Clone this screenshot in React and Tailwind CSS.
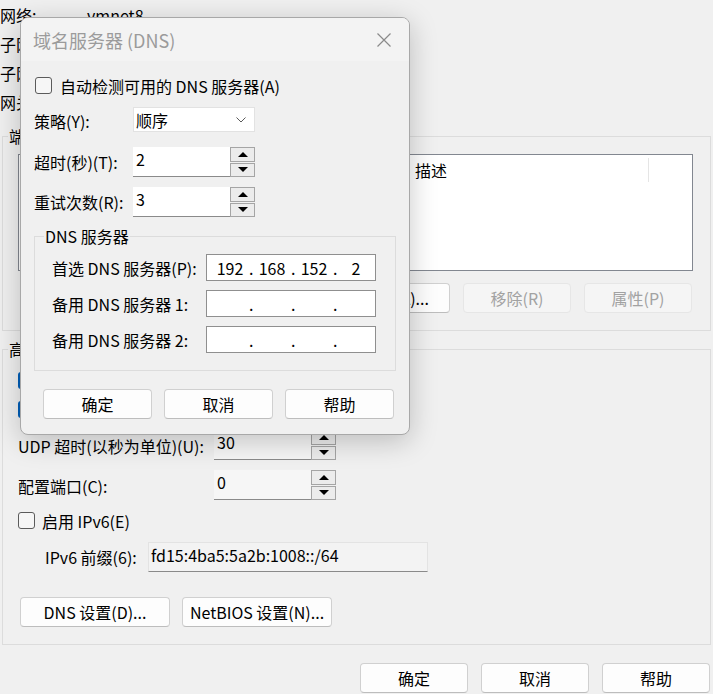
import React from 'react';

const Check = ({ checked }) =>
  checked ? (
    <span className="flex h-[17px] w-[17px] shrink-0 items-center justify-center rounded-[3px] bg-[#005fb8]">
      <svg width="11" height="9" viewBox="0 0 11 9">
        <path d="M1 4.5 L4 7.5 L10 1.5" fill="none" stroke="#fff" strokeWidth="1.4" />
      </svg>
    </span>
  ) : (
    <span className="h-[17px] w-[17px] shrink-0 rounded-[3px] border border-[#5b5b5b] bg-[#f6f6f6]" />
  );

const Tri = ({ up }) => (
  <svg width="10" height="5" viewBox="0 0 10 5">
    <path d={up ? 'M0 5 L5 0 L10 5 Z' : 'M0 0 L10 0 L5 5 Z'} fill="#000" />
  </svg>
);

const Spin = () => (
  <div className="flex h-full w-[25px] shrink-0 flex-col gap-px">
    <span className="flex flex-1 items-center justify-center border border-[#a5a5a5] bg-[#ececec]">
      <Tri up />
    </span>
    <span className="flex flex-1 items-center justify-center border border-[#a5a5a5] bg-[#ececec]">
      <Tri />
    </span>
  </div>
);

const SpinBox = ({ value, width, bg = 'bg-white' }) => (
  <div className="flex h-[30px]">
    <div className={`flex items-start border-b border-[#8a8a8a] pl-[3px] pt-[4px] ${bg} ${width}`}>{value}</div>
    <Spin />
  </div>
);

const Btn = ({ children, className = '', disabled }) => (
  <button
    className={`flex h-[30px] w-[108px] items-center justify-center rounded-[4px] border ${
      disabled
        ? 'border-[#e6e6e6] bg-[#f5f5f5] text-[#a2a2a2]'
        : 'border-[#d0d0d0] border-b-[#bdbdbd] bg-[#fdfdfd] text-black'
    } ${className}`}
  >
    {children}
  </button>
);

const IpBox = ({ parts }) => (
  <div className="flex h-[27px] w-[170px] items-center border border-[#8f8f8f] bg-white pl-[4px]">
    {parts.map((p, i) => (
      <React.Fragment key={i}>
        <span className="w-[38px] text-center">{p}</span>
        {i < 3 && <span className="w-[4px] text-center">.</span>}
      </React.Fragment>
    ))}
  </div>
);

const DnsDialog = () => (
  <div className="absolute left-[20px] top-[17px] z-10 w-[390px] overflow-hidden rounded-[8px] border border-[#a8a8a8] bg-[#f0f0f0] shadow-[0_6px_28px_rgba(0,0,0,0.22)]">
    <div className="flex h-[43px] items-center justify-between bg-[#f3f3f3] pl-[12px] pr-[18px]">
      <span className="text-[18px] text-[#9b9b9b]">域名服务器 (DNS)</span>
      <svg width="14" height="14" viewBox="0 0 14 14">
        <path d="M0.5 0.5 L13.5 13.5 M13.5 0.5 L0.5 13.5" stroke="#8a8a8a" strokeWidth="1.2" />
      </svg>
    </div>

    <div className="flex flex-col pb-[15px] pl-[13px] pt-[16px]">
      <div className="flex h-[17px] items-center gap-[8px] pl-px">
        <Check />
        <span>自动检测可用的 DNS 服务器(A)</span>
      </div>

      <div className="mt-[13px] flex h-[25px] items-center">
        <span className="w-[99px] pt-[3px]">策略(Y):</span>
        <div className="flex h-full w-[122px] items-center justify-between border border-[#e2e2e2] bg-white pl-[2px] pr-[8px]">
          <span>顺序</span>
          <svg width="10" height="6" viewBox="0 0 10 6">
            <path d="M0.5 0.5 L5 5 L9.5 0.5" fill="none" stroke="#5a5a5a" strokeWidth="1" />
          </svg>
        </div>
      </div>

      <div className="mt-[15px] flex h-[30px] items-center">
        <span className="w-[99px]">超时(秒)(T):</span>
        <SpinBox value="2" width="w-[97px]" />
      </div>

      <div className="mt-[10px] flex h-[30px] items-center">
        <span className="w-[99px]">重试次数(R):</span>
        <SpinBox value="3" width="w-[97px]" />
      </div>

      <fieldset className="mt-[10px] w-[362px] border border-[#dcdcdc] p-0">
        <legend className="ml-[9px] px-px leading-[18px]">DNS 服务器</legend>
        <div className="flex flex-col gap-[9px] pb-[17px] pl-[17px] pt-[9px]">
          <div className="flex items-center">
            <span className="w-[154px]">首选 DNS 服务器(P):</span>
            <IpBox parts={['192', '168', '152', '2']} />
          </div>
          <div className="flex items-center">
            <span className="w-[154px]">备用 DNS 服务器 1:</span>
            <IpBox parts={['', '', '', '']} />
          </div>
          <div className="flex items-center">
            <span className="w-[154px]">备用 DNS 服务器 2:</span>
            <IpBox parts={['', '', '', '']} />
          </div>
        </div>
      </fieldset>

      <div className="ml-[9px] mt-[18px] flex gap-[12px]">
        <Btn className="w-[109px]">确定</Btn>
        <Btn className="w-[109px]">取消</Btn>
        <Btn className="w-[109px]">帮助</Btn>
      </div>
    </div>
  </div>
);

const App = () => {
  // rows of the network window; the values are hidden behind the dialog, only the labels peek out
  const info = [
    ['网络:', 'vmnet8'],
    ['子网 IP:', ''],
    ['子网掩码:', ''],
    ['网关 IP:', ''],
  ];

  return (
    <div className="relative h-[694px] w-[713px] overflow-hidden bg-[#f0f0f0] font-['Noto_Sans_CJK_SC',sans-serif] text-[16px] leading-none text-black">
      <DnsDialog />

      <div className="flex flex-col">
        {info.map(([k, v]) => (
          <div key={k} className="flex h-[29px] items-center">
            <span className="w-[87px]">{k}</span>
            <span>{v}</span>
          </div>
        ))}

        <fieldset className="ml-[2px] mt-[11px] w-[709px] border border-[#dcdcdc] p-0">
          <legend className="ml-[5px] px-px leading-[18px]">端口转发(T)</legend>
          <div className="flex flex-col pb-[17px] pl-[15px] pt-[9px]">
            <div className="h-[117px] w-[675px] border border-[#828790] bg-white">
              <div className="flex h-[30px] items-center">
                <span className="h-[24px] w-[100px] border-r border-[#e5e5e5]" />
                <span className="h-[24px] w-[80px] border-r border-[#e5e5e5]" />
                <span className="h-[24px] w-[210px] border-r border-[#e5e5e5]" />
                <span className="flex h-[24px] w-[240px] items-center border-r border-[#e5e5e5] pl-[6px]">描述</span>
              </div>
            </div>
            <div className="mr-[18px] mt-[12px] flex justify-end gap-[13px]">
              <Btn>添加(A)...</Btn>
              <Btn disabled>移除(R)</Btn>
              <Btn disabled>属性(P)</Btn>
            </div>
          </div>
        </fieldset>

        <fieldset className="ml-[2px] mt-[9px] w-[709px] border border-[#dcdcdc] p-0">
          <legend className="ml-[5px] px-px leading-[18px]">高级</legend>
          <div className="flex flex-col pb-[17px] pl-[15px] pt-[14px]">
            <div className="flex h-[17px] items-center">
              <Check checked />
            </div>
            <div className="mt-[12px] flex h-[17px] items-center">
              <Check checked />
            </div>
            <div className="mt-[12px] flex h-[30px] items-center">
              <span className="w-[196px] pt-[2px]">UDP 超时(以秒为单位)(U):</span>
              <SpinBox value="30" width="w-[97px]" bg="bg-[#f6f6f6]" />
            </div>
            <div className="mt-[10px] flex h-[30px] items-center">
              <span className="w-[196px] pt-[2px]">配置端口(C):</span>
              <SpinBox value="0" width="w-[97px]" bg="bg-[#f6f6f6]" />
            </div>
            <div className="mt-[12px] flex h-[17px] items-center gap-[7px]">
              <Check />
              <span>启用 IPv6(E)</span>
            </div>
            <div className="mt-[13px] flex h-[30px] items-center pl-[27px]">
              <span className="w-[103px]">IPv6 前缀(6):</span>
              <div className="flex h-full w-[280px] items-start border border-[#e3e3e3] border-b-[#8a8a8a] bg-[#f3f3f3] pl-[2px] pt-[4px]">
                fd15:4ba5:5a2b:1008::/64
              </div>
            </div>
            <div className="mt-[25px] flex gap-[12px] pl-[2px]">
              <Btn className="w-[150px]">DNS 设置(D)...</Btn>
              <Btn className="w-[150px]">NetBIOS 设置(N)...</Btn>
            </div>
          </div>
        </fieldset>

        <div className="mr-[3px] mt-[18px] flex justify-end gap-[13px]">
          <Btn>确定</Btn>
          <Btn>取消</Btn>
          <Btn>帮助</Btn>
        </div>
      </div>
    </div>
  );
};

export default App;
